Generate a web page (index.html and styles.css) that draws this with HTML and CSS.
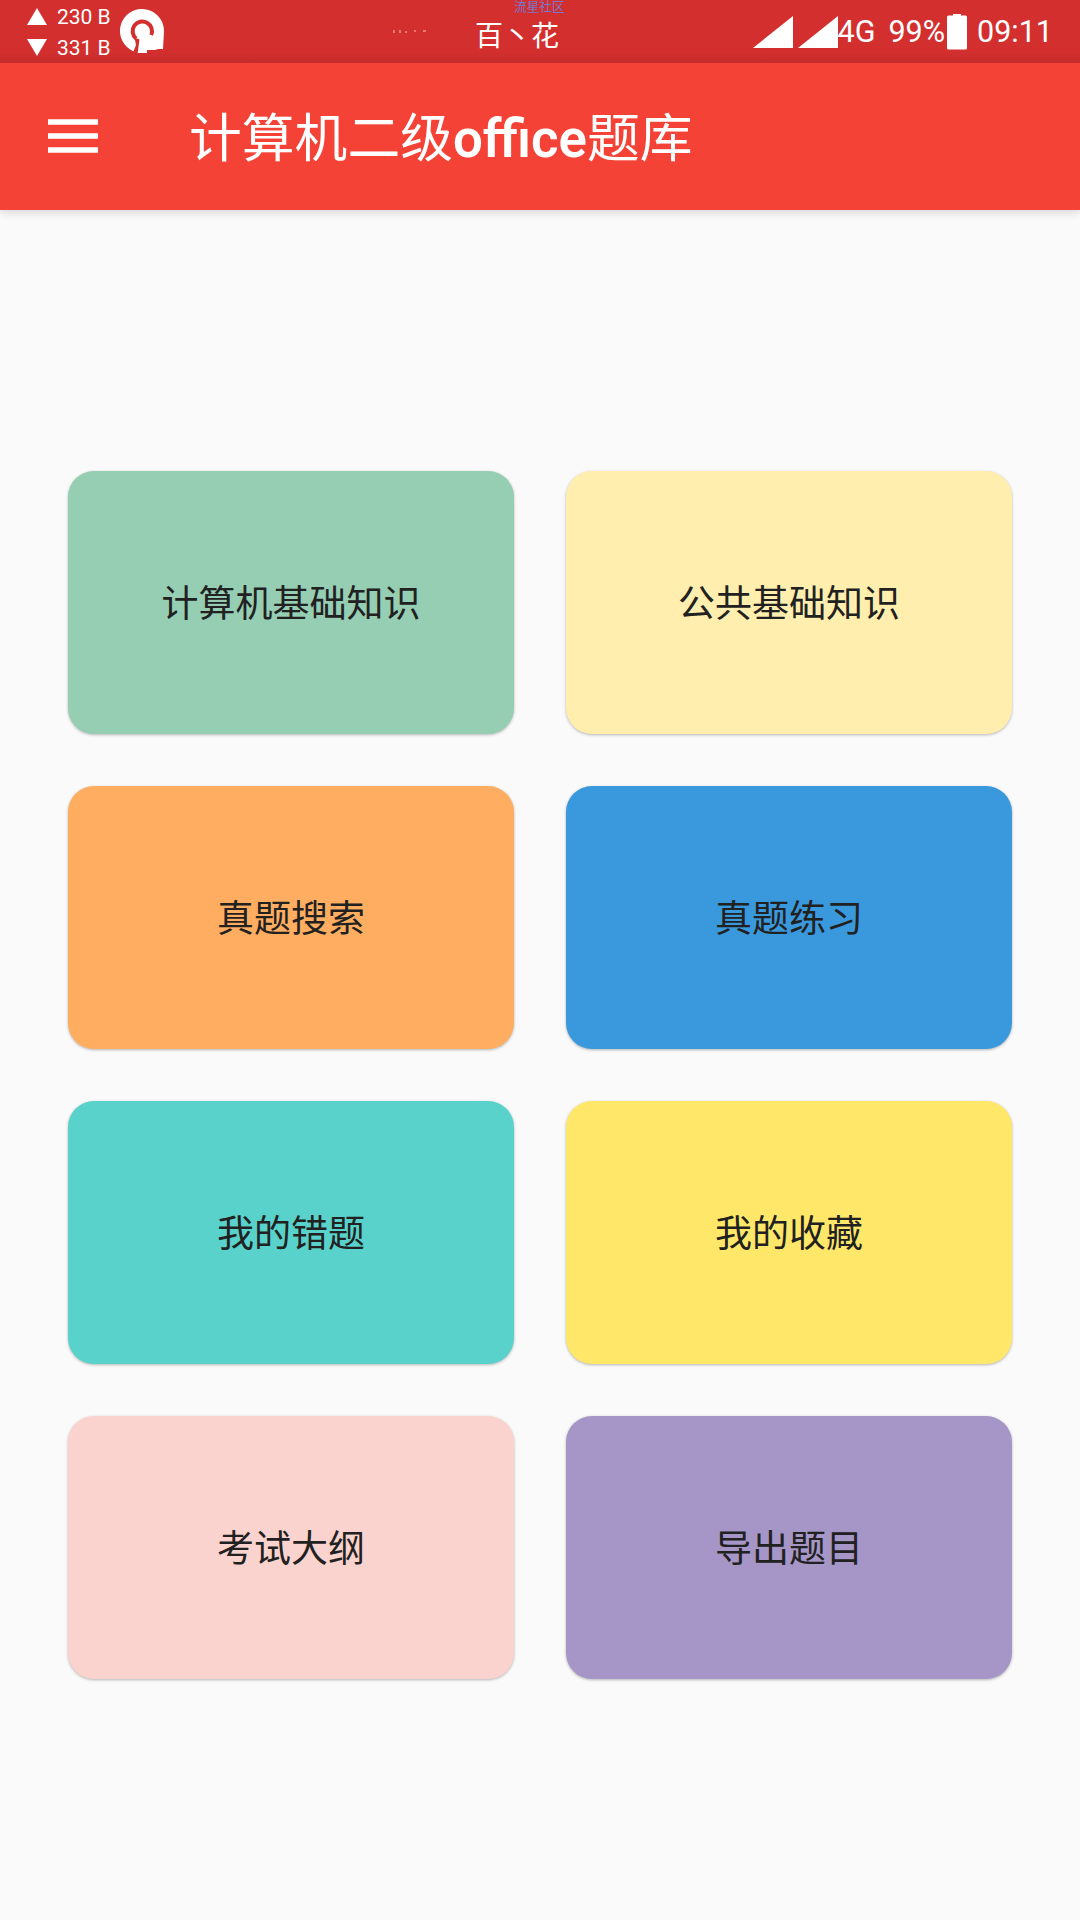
FILE: index.html
```
<!DOCTYPE html>
<html lang="zh-CN">
<head>
    <meta charset="UTF-8">
    <meta name="viewport" content="width=device-width, initial-scale=1.0">
    <title>计算机二级office题库</title>
    <link rel="stylesheet" href="styles.css">
</head>
<body>
    <div class="status-bar">
        <div class="net-speed">
            <div class="speed-row">
                <svg width="20" height="17" viewBox="0 0 20 17"><path d="M10 0L20 17H0z" fill="#fff"/></svg>
                <span>230 B</span>
            </div>
            <div class="speed-row">
                <svg width="20" height="17" viewBox="0 0 20 17"><path d="M0 0H20L10 17z" fill="#fff"/></svg>
                <span>331 B</span>
            </div>
        </div>
        <svg class="app-icon" width="44" height="45" viewBox="0 0 44 45">
            <path d="M14 42.500A22 22 0 1 1 44 22L43 40H38L35 41H27V44H17V40z" fill="#fff"/>
            <path d="M31.200 26A9.700 9.700 0 1 0 16 29.500" fill="none" stroke="#d32f2f" stroke-width="4"/>
            <path d="M14.500 28.500L19.500 30.500L17.500 45H12.500L16 36z" fill="#d32f2f"/>
        </svg>
        <svg class="dots" width="34" height="4" viewBox="0 0 34 4">
            <path d="M1 0v3M7 0v3M13 1v2M21 1h2M30 1h3" stroke="#ef8f8a" stroke-width="1.500"/>
        </svg>
        <span class="ticker">百丶花</span>
        <div class="status-right">
            <svg width="40" height="32" viewBox="0 0 40 32"><path d="M40 0V32H0z" fill="#fff"/></svg>
            <svg class="signal" width="40" height="32" viewBox="0 0 40 32"><path d="M40 0V32H0z" fill="#fff"/></svg>
            <span>4G</span>
            <span class="percent">99%</span>
            <svg class="battery" width="20" height="36" viewBox="0 0 20 36">
                <rect x="6" y="0" width="8" height="3" fill="#fff"/>
                <rect x="0" y="1.500" width="20" height="34" rx="1.500" fill="#fff"/>
            </svg>
            <span class="clock">09:11</span>
        </div>
        <span class="watermark">流星社区</span>
    </div>

    <div class="toolbar">
        <svg width="50" height="34" viewBox="0 0 50 34">
            <path d="M0 3H50M0 17H50M0 31H50" stroke="#fff" stroke-width="5.500"/>
        </svg>
        <h1 class="title">计算机二级<span>office</span>题库</h1>
    </div>

    <div class="menu">
        <div class="card green">计算机基础知识</div>
        <div class="card cream">公共基础知识</div>
        <div class="card orange">真题搜索</div>
        <div class="card blue">真题练习</div>
        <div class="card teal">我的错题</div>
        <div class="card yellow">我的收藏</div>
        <div class="card pink">考试大纲</div>
        <div class="card purple">导出题目</div>
    </div>
</body>
</html>
```
FILE: styles.css
```
* {
    box-sizing: border-box;
    margin: 0;
    padding: 0;
}
body {
    font-family: Roboto, "Noto Sans CJK SC", sans-serif;
    min-height: 100vh;
    background-color: #FAFAFA;
    color: #212121;
    overflow: hidden;
}
svg {
    display: block;
    flex-shrink: 0;
}
.status-bar {
    position: relative;
    display: flex;
    height: 63px;
    padding-left: 27px;
    background: linear-gradient(#D32F2F 52px, #C62B2B);
    color: #FFFFFF;
    white-space: nowrap;
}
.net-speed {
    width: 93px;
    padding-top: 1px;
    font-size: 21px;
}
.speed-row {
    display: flex;
    align-items: center;
    gap: 10px;
    height: 31px;
}
.app-icon {
    margin-top: 9px;
}
.dots {
    margin: 30px 0 0 229px;
}
.ticker {
    margin: 16px 0 0 48px;
    font-size: 28px;
    line-height: 42px;
}
.status-right {
    display: flex;
    align-items: center;
    height: 63px;
    margin-left: auto;
    padding-right: 27px;
    font-size: 30.5px;
}
.signal {
    margin-left: 5px;
}
.percent {
    margin-left: 13px;
}
.battery {
    margin-left: 2px;
}
.clock {
    margin-left: 10px;
}
.watermark {
    position: absolute;
    top: -2px;
    left: 514px;
    font-size: 12.7px;
    line-height: 18px;
    color: #7878CC;
}
.toolbar {
    display: flex;
    align-items: center;
    height: 147px;
    padding: 0 0 2px 48px;
    background-color: #F44336;
    color: #FFFFFF;
    box-shadow: 0 2px 9px rgba(0, 0, 0, 0.16);
}
.title {
    margin-left: 91px;
    padding-top: 6px;
    font-size: 52.8px;
    font-weight: 400;
    line-height: 70px;
}
.title span {
    font-weight: 600;
}
.menu {
    display: grid;
    grid-template-columns: 446px 446px;
    grid-auto-rows: 263px;
    gap: 52px;
    padding: 261px 68px 0;
}
.card {
    display: flex;
    justify-content: center;
    align-items: center;
    padding-bottom: 4px;
    border-radius: 26px;
    font-size: 37px;
    box-shadow: 0 1px 3px rgba(0, 0, 0, 0.28);
}
.green {
    background-color: #96CEB4;
}
.cream {
    background-color: #FFEEAD;
}
.orange {
    background-color: #FFAD60;
}
.blue {
    background-color: #3A99DC;
}
.teal {
    background-color: #58D2CA;
}
.yellow {
    background-color: #FFE869;
}
.pink {
    background-color: #FBD3CE;
}
.purple {
    background-color: #A696C8;
}
```
